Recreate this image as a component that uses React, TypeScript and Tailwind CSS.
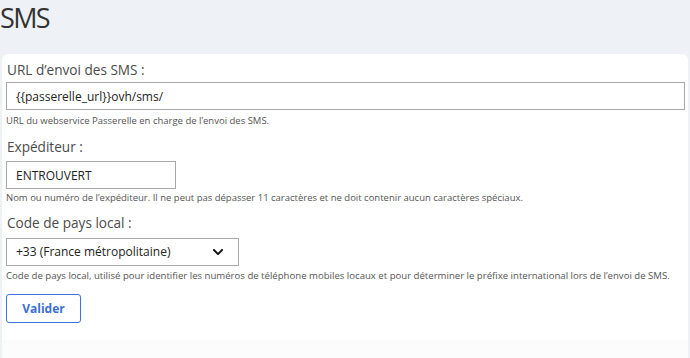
import { FaChevronDown } from "react-icons/fa"

const font = { fontFamily: '"Open Sans", "Noto Sans", sans-serif' }

export default function App() {
  return (
    <div className="h-[358px] w-[690px] overflow-hidden bg-[#eef2f6] text-[#4b4b4b]" style={font}>
      {/* Title */}
      <div className="h-[54px]">
        <h1 className="text-[27px] leading-[36px] tracking-[-0.06em] text-[#333]">SMS</h1>
      </div>

      {/* Form panel */}
      <div className="mx-[2px] rounded-t-md bg-white">
        <form className="px-1 pt-[6px] pb-[17px]">
          <div className="mb-[9px]">
            <label className="block px-[1px] text-[13.6px] leading-[20px]">URL d’envoi des SMS :</label>
            <input
              readOnly
              value="{{passerelle_url}}ovh/sms/"
              className="mt-[2px] block h-[28px] w-[679px] border border-[#a9a9a9] px-[9px] text-[12px] text-[#222] outline-none"
            />
            <p className="mt-[4px] text-[9.5px] leading-[14px] text-[#555]">
              URL du webservice Passerelle en charge de l’envoi des SMS.
            </p>
          </div>

          <div className="mb-[8px]">
            <label className="block px-[1px] text-[13.6px] leading-[20px]">Expéditeur :</label>
            <input
              readOnly
              value="ENTROUVERT"
              className="mt-[4px] block h-[28px] w-[170px] border border-[#a9a9a9] px-[9px] text-[12px] text-[#222] outline-none"
            />
            <p className="mt-[2px] text-[9.5px] leading-[14px] text-[#555]">
              Nom ou numéro de l’expéditeur. Il ne peut pas dépasser 11 caractères et ne doit contenir aucun caractères spéciaux.
            </p>
          </div>

          <div className="mb-[11px]">
            <label className="block px-[1px] text-[13.6px] leading-[20px]">Code de pays local :</label>
            <div className="mt-[5px] flex h-[28px] w-[233px] items-center justify-between border border-[#a9a9a9] pl-[9px] pr-[14px] text-[12px] text-[#222]">
              <span>+33 (France métropolitaine)</span>
              <FaChevronDown className="text-[12px] text-[#111]" />
            </div>
            <p className="mt-[3px] text-[9.6px] leading-[14px] text-[#555]">
              Code de pays local, utilisé pour identifier les numéros de téléphone mobiles locaux et pour déterminer le préfixe international lors de l’envoi de SMS.
            </p>
          </div>

          <button
            type="button"
            className="h-[29px] w-[75px] rounded-[3px] border border-[#3b74e0] bg-white text-[12px] font-bold text-[#3a6fd8]"
          >
            Valider
          </button>
        </form>
        <div className="h-[20px] bg-[#fcfcfd]" />
      </div>
    </div>
  )
}
